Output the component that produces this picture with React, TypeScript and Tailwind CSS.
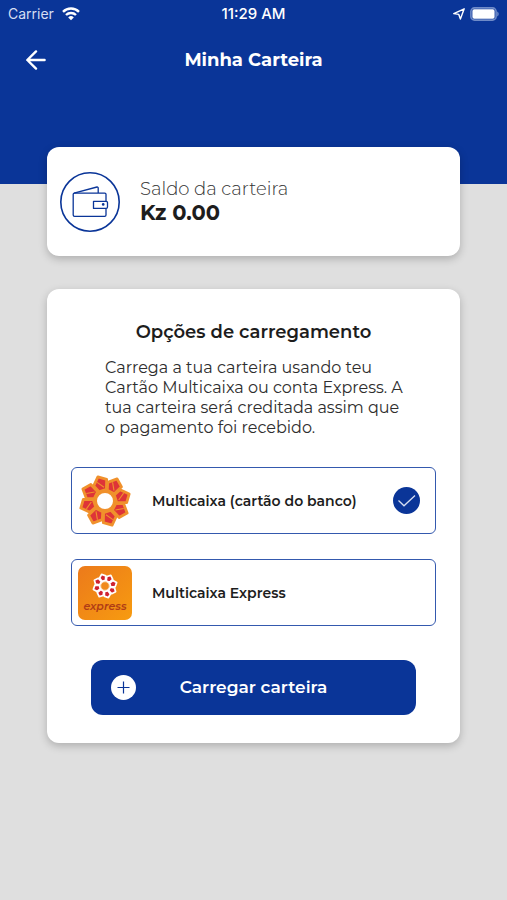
import React, { useState } from 'react';

type Method = 'multicaixa' | 'express';

const PETALS = [0, 45, 90, 135, 180, 225, 270, 315];

function WifiIcon() {
    return (
        <svg width="18" height="14" viewBox="0 0 18 14" fill="none" stroke="white" strokeWidth="2.4" aria-hidden="true">
            <path d="M1 4.8a11.4 11.4 0 0 1 16 0" />
            <path d="M4 8a7.2 7.2 0 0 1 10 0" />
            <path d="M9 13.2 6.2 10.4a4 4 0 0 1 5.6 0Z" fill="white" stroke="none" />
        </svg>
    );
}

function LocationIcon() {
    return (
        <svg width="12" height="12" viewBox="0 0 12 12" fill="none" stroke="white" strokeWidth="1.4" strokeLinejoin="round" aria-hidden="true">
            <path d="M11.200.8.8 5.600l5 .8L7.400 11Z" />
        </svg>
    );
}

function BatteryIcon() {
    return (
        <svg width="30" height="14" viewBox="0 0 30 14" aria-hidden="true">
            <rect x="1.9" y=".9" width="25.2" height="12.2" rx="3.6" fill="none" stroke="#6f8bc8" strokeWidth="1.6" />
            <rect x="3.4" y="2.3" width="22.2" height="9.4" rx="1.8" fill="white" />
            <path d="M28.2 4.6c2 .7 2 4.1 0 4.8Z" fill="#6f8bc8" />
        </svg>
    );
}

function BackIcon() {
    return (
        <svg width="20" height="20" viewBox="0 0 20 20" fill="none" stroke="white" strokeWidth="2.4" strokeLinecap="round" strokeLinejoin="round" aria-hidden="true">
            <path d="M18.6 10H1.5M10 1.4 1.3 10l8.7 8.6" />
        </svg>
    );
}

function WalletIcon() {
    return (
        <svg width="60" height="60" viewBox="0 0 60 60" fill="none" stroke="#0a3598" strokeWidth="1.3" strokeLinejoin="round" aria-hidden="true">
            <circle cx="30" cy="30" r="29.2" strokeWidth="1.6" />
            <path d="M46 29.3v-7a1.2 1.2 0 0 0-1.2-1.2H14.4a1.2 1.2 0 0 0-1.2 1.2V43a1.4 1.4 0 0 0 1.4 1.4h30A1.4 1.4 0 0 0 46 43v-6.5" />
            <path d="M14 21.1 37 15a1 1 0 0 1 1.2.9v5.2" />
            <path d="M33.5 29.3h12.7a1.3 1.3 0 0 1 1.3 1.3v4.5a1.3 1.3 0 0 1-1.3 1.3H33.5Z" />
            <circle cx="43.2" cy="32.4" r="1.3" fill="#0a3598" stroke="none" />
        </svg>
    );
}

function MulticaixaLogo() {
    return (
        <svg width="54" height="54" viewBox="-27 -27 54 54" className="shrink-0" aria-hidden="true">
            <circle r="17" fill="#f0912c" />
            {PETALS.map((angle) => (
                <g key={angle} transform={`rotate(${angle - 15})`}>
                    <path d="M-3.4-10.500-7-17.500-.6-25.200 7.200-20.500 4.400-11Z" fill="#de3438" stroke="#f0912c" strokeWidth="2.800" strokeLinejoin="round" />
                    <path d="M-2.800-20 2.600-13.500" stroke="#f0912c" strokeWidth="1.100" />
                </g>
            ))}
            <circle r="9" fill="white" stroke="#f0912c" strokeWidth="2" />
        </svg>
    );
}

function ExpressLogo() {
    return (
        <svg width="54" height="54" viewBox="0 0 54 54" className="shrink-0" aria-hidden="true">
            <defs>
                <linearGradient id="express-bg" x1="0" y1="0" x2="1" y2="1">
                    <stop offset="0" stopColor="#ec7a1b" />
                    <stop offset="1" stopColor="#f79b10" />
                </linearGradient>
            </defs>
            <rect width="54" height="54" rx="7" fill="url(#express-bg)" />
            <g transform="translate(27 20) scale(.48)">
                {PETALS.map((angle) => (
                    <path key={angle} transform={`rotate(${angle - 15})`} d="M-3.5-11-6.5-19-.6-25.200 7-20 4-11Z" fill="#cf2230" stroke="white" strokeWidth="3.600" strokeLinejoin="round" />
                ))}
                <circle r="9" fill="#f08a1c" stroke="white" strokeWidth="1.500" />
            </g>
            <text x="27" y="44" textAnchor="middle" fontSize="11" fontWeight="600" fontStyle="italic" fill="#b03c16">express</text>
        </svg>
    );
}

const OPTIONS: { id: Method; label: string; logo: React.ReactNode }[] = [
    { id: 'multicaixa', label: 'Multicaixa (cartão do banco)', logo: <MulticaixaLogo /> },
    { id: 'express', label: 'Multicaixa Express', logo: <ExpressLogo /> },
];

export default function App() {
    const [method, setMethod] = useState<Method>('multicaixa');

    return (
        <div className="min-h-screen bg-[#dfdfdf] font-[Montserrat,Inter,sans-serif] text-[#1d1d1d]">
            <header className="bg-[#0a3598] pb-[92px] text-white">
                <div className="grid h-7 grid-cols-3 items-center px-2 font-[Inter,sans-serif] text-sm">
                    <div className="flex items-center gap-2">
                        <span className="text-[#d5def2]">Carrier</span>
                        <WifiIcon />
                    </div>
                    <span className="text-center text-[15px] font-medium">11:29 AM</span>
                    <div className="flex items-center justify-end gap-1">
                        <LocationIcon />
                        <BatteryIcon />
                    </div>
                </div>
                <div className="grid h-16 grid-cols-[40px_1fr_40px] items-center px-4">
                    <button type="button" aria-label="Voltar" className="flex h-9 w-10 items-center justify-center">
                        <BackIcon />
                    </button>
                    <h1 className="text-center text-lg font-bold">Minha Carteira</h1>
                </div>
            </header>

            <main className="-mt-[37px] px-[47px] pb-10">
                <section className="flex h-[109px] items-center gap-5 rounded-xl bg-white px-[13px] shadow-[0_3px_8px_rgba(0,0,0,0.22)]">
                    <WalletIcon />
                    <div className="pb-0.5">
                        <p className="text-lg leading-6 font-light text-[#333]">Saldo da carteira</p>
                        <p className="text-[21px] leading-6 font-bold">Kz 0.00</p>
                    </div>
                </section>

                <section className="mt-[33px] rounded-xl bg-white px-6 pt-[29px] pb-7 shadow-[0_3px_8px_rgba(0,0,0,0.22)]">
                    <h2 className="text-center text-lg leading-7 font-semibold">Opções de carregamento</h2>
                    <p className="mt-3 pr-7 pl-[34px] text-base leading-5 text-[#2e2e2e]">
                        Carrega a tua carteira usando teu Cartão Multicaixa ou conta Express. A tua carteira será creditada assim que o pagamento foi recebido.
                    </p>

                    <div role="radiogroup" aria-label="Opções de carregamento" className="mt-[29px] flex flex-col gap-[25px]">
                        {OPTIONS.map(({ id, label, logo }) => (
                            <label key={id} className="flex h-[67px] cursor-pointer items-center rounded-md border border-[#3459ae] pr-[15px] pl-1.5">
                                <input type="radio" name="method" value={id} checked={method === id} onChange={() => setMethod(id)} className="sr-only" />
                                {logo}
                                <span className="ml-5 flex-1 text-sm font-semibold">{label}</span>
                                {method === id && (
                                    <svg width="27" height="27" viewBox="0 0 27 27" fill="none" aria-hidden="true">
                                        <circle cx="13.5" cy="13.5" r="13.5" fill="#0a3598" />
                                        <path d="m5.500 13.500 5.500 5.300L22 8.500" stroke="#d5def2" strokeWidth="1.300" />
                                    </svg>
                                )}
                            </label>
                        ))}
                    </div>

                    <div className="mt-[34px] px-5">
                        <button type="button" className="grid h-[55px] w-full grid-cols-[25px_1fr_25px] items-center rounded-xl bg-[#0a3598] px-5 text-white">
                            <svg width="25" height="25" viewBox="0 0 25 25" aria-hidden="true">
                                <circle cx="12.5" cy="12.5" r="12.5" fill="white" />
                                <path d="M12.5 6.500v12M6.500 12.500h12" stroke="#0a3598" strokeWidth="1.200" />
                            </svg>
                            <span className="text-[17px] font-semibold">Carregar carteira</span>
                        </button>
                    </div>
                </section>
            </main>
        </div>
    );
}
